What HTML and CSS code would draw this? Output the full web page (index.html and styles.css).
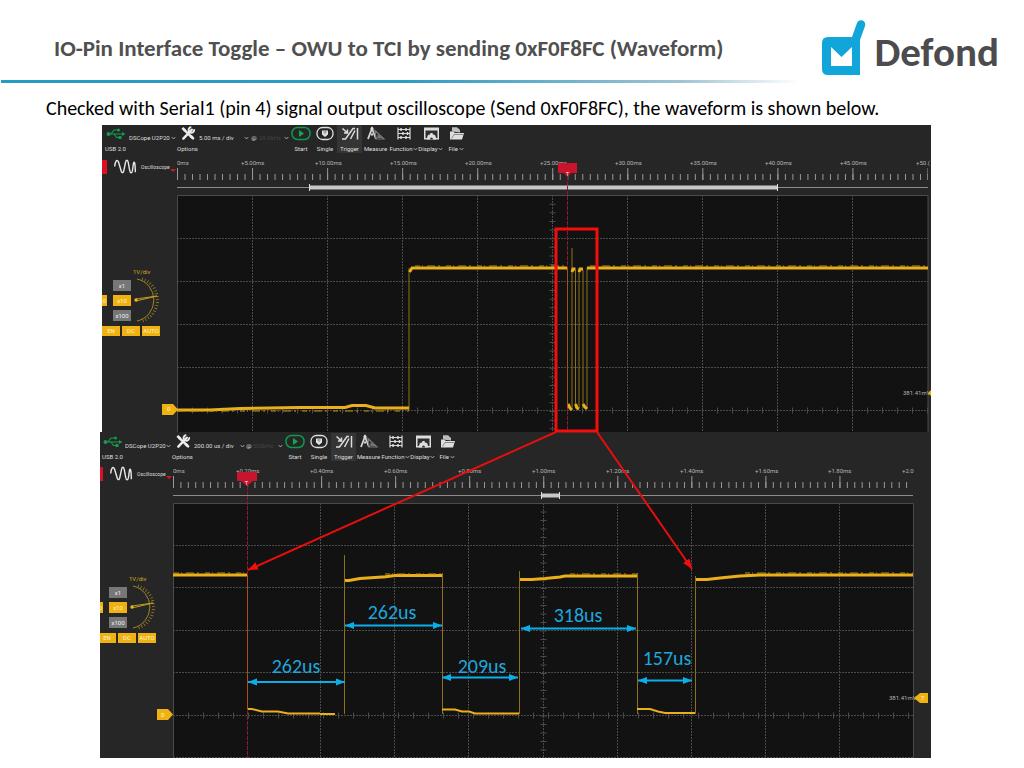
FILE: index.html
```html
<!DOCTYPE html>
<html lang="en">
<head>
<meta charset="utf-8">
<meta name="viewport" content="width=device-width, initial-scale=1">
<title>IO-Pin Interface Toggle</title>
<link rel="stylesheet" href="styles.css">
</head>
<body>
<svg class="sprite" aria-hidden="true">
  <symbol id="usb" viewBox="0 0 20 12"><g fill="none" stroke="#129c50" stroke-width="1.2"><path d="M2 6.500H17M5 6.500L8 2.500H12M8 6.500L10.500 10H13"/></g><g fill="#129c50"><circle cx="2.500" cy="6.500" r="2"/><circle cx="12.500" cy="2.500" r="1.500"/><path d="M16 4.500L19.500 6.500L16 8.500ZM12.500 8.500H15.500V11.500H12.500Z"/></g></symbol>
  <symbol id="tools" viewBox="0 0 16 16"><path d="M3.500 3.500L13 13" stroke="#ececec" stroke-width="2.600"/><path d="M1 3L3 1L6 4L4 6Z" fill="#ececec"/><path d="M12 4L3 13.500" stroke="#ececec" stroke-width="2.600" stroke-linecap="round"/><path d="M14.500 3.500A3 3 0 1 1 11.500 1.200" fill="none" stroke="#ececec" stroke-width="2"/><path d="M9.500 11.500L12 9.500L15 13L13.500 15Z" fill="#ececec"/></symbol>
  <symbol id="start" viewBox="0 0 20 14"><rect x="1" y="1" width="18" height="12" rx="5.500" fill="none" stroke="#0d9a4c" stroke-width="1.500"/><path d="M8 3.500L13 7L8 10.500Z" fill="#12a653"/></symbol>
  <symbol id="single" viewBox="0 0 20 14"><rect x="2" y="1" width="16" height="12" rx="5.500" fill="none" stroke="#dedede" stroke-width="1.300"/><path d="M7 4H13V8L10 10.500L7 8Z" fill="#e6e6e6"/><path d="M8 5.500H12M10 4V8" stroke="#777" stroke-width=".7"/></symbol>
  <symbol id="trigger" viewBox="0 0 20 14"><g fill="none" stroke="#dcdcdc" stroke-width="1.500"><path d="M2 12.500H5.500L13 2H15M17.500 1.500V13M2.500 2L7.500 6.500M7.500 3V6.500H4M10.500 12.500L15 4"/></g></symbol>
  <symbol id="measure" viewBox="0 0 20 14"><path d="M2 12.500L6 2L10 12.500M5 8L7 8" fill="none" stroke="#d5d5d5" stroke-width="1.800"/><path d="M9 4L18 12.500H10ZM12 9V11H14.500Z" fill="none" stroke="#777" stroke-width="1.200"/><circle cx="6" cy="2" r="1.500" fill="#ddd"/></symbol>
  <symbol id="function" viewBox="0 0 20 14"><path d="M4 1V13M16 1V13M4 3H16M4 7H16M4 11H16" stroke="#dadada" stroke-width="1.200"/><path d="M7 1.500V4.500M12 1.500V4.500M9 5.500V8.500M13.500 5.500V8.500M7 9.500V12.500M12 9.500V12.500" stroke="#dadada" stroke-width="1.500"/></symbol>
  <symbol id="display" viewBox="0 0 20 14"><path d="M3 1H18V13H3Z" fill="#dedede"/><path d="M4.500 4H16.500V11.500H4.500Z" fill="#303030"/><path d="M6 13V11L7 8.500L9 8L9.500 6.500H11.500L12 8L14 8.500L15 11V13Z" fill="#dedede"/><path d="M9 13A1.500 2 0 0 1 12 13Z" fill="#303030"/></symbol>
  <symbol id="file" viewBox="0 0 20 14"><path d="M5 5V.8H10L13 3.500V6" fill="#bdbdbd"/><path d="M3 13V5H6L8 6.500H17L15 13Z" fill="#dedede"/><path d="M4.500 12L7 8H16" fill="none" stroke="#666" stroke-width=".7"/></symbol>
  <symbol id="chevron" viewBox="0 0 5 4"><path d="M.7 1L2.500 3L4.300 1" fill="none" stroke="#bbb" stroke-width=".8"/></symbol>
  <symbol id="wave" viewBox="0 0 24 16"><path d="M1 8C1.500 2 3.500 0 5 3L8 13C9 15.500 10.500 15 11 11L12.500 4C13 .5 15 .5 15.500 4L17 12C17.500 15.500 19.500 15.500 20 12L21 5C21.500 1.500 23 3 23 14" fill="none" stroke="#e8e8e8" stroke-width="1.500"/></symbol>
  <symbol id="dial" viewBox="0 0 30 50"><g fill="none" stroke="#c09a24"><path d="M4 4A21.500 21.500 0 0 1 4 46" stroke-width=".8"/><path d="M9 4A22 22 0 0 1 9 46" stroke-width="3" stroke-dasharray=".8 2.200" opacity=".75"/><path d="M3 26L24 21L3 24" stroke-width="1"/></g><circle cx="3" cy="25" r="1.700" fill="#efb414"/></symbol>
  <symbol id="tag" viewBox="0 0 16 11"><path d="M0 0H11L16 5.500L11 11H0Z" fill="#efb211"/></symbol>
</svg>

<header class="header">
  <h1 class="title">IO-Pin Interface Toggle – OWU to TCI by sending 0xF0F8FC (Waveform)</h1>
  <div class="brand">
    <svg class="brand-mark" viewBox="0 0 45 57" aria-hidden="true"><path d="M7 17H31L36 3A4 4 0 0 1 44 6L39 20V55H7Q1 55 1 49V23Q1 17 7 17Z" fill="#12a5da"/><path d="M10 27V46H31V27L20.500 37Z" fill="#fff"/></svg>
    <span class="brand-name">Defond</span>
  </div>
</header>
<div class="rule"></div>

<main>
  <p class="lead">Checked with Serial1 (pin 4) signal output oscilloscope (Send 0xF0F8FC), the waveform is shown below.</p>
  <div class="figure">
    <section class="scope scope-wide" aria-label="Full waveform">
      <div class="toolbar">
        <div class="tool"><svg class="icon"><use href="#usb"/></svg><span>USB 2.0</span></div>
        <label class="picker"><select aria-label="Device"><option>DSCope U2P20</option></select><svg class="chevron"><use href="#chevron"/></svg></label>
        <button class="tool"><svg class="icon"><use href="#tools"/></svg><span>Options</span></button>
        <label class="picker"><select aria-label="Time base"><option>5.00 ms / div</option></select><svg class="chevron"><use href="#chevron"/></svg></label>
        <span class="at">@</span>
        <label class="picker dim"><select aria-label="Sample rate"><option>20.0kHz</option></select><svg class="chevron"><use href="#chevron"/></svg></label>
        <button class="tool"><svg class="icon"><use href="#start"/></svg><span>Start</span></button>
        <button class="tool"><svg class="icon"><use href="#single"/></svg><span>Single</span></button>
        <button class="tool active"><svg class="icon"><use href="#trigger"/></svg><span>Trigger</span></button>
        <button class="tool"><svg class="icon"><use href="#measure"/></svg><span>Measure</span></button>
        <button class="tool"><svg class="icon"><use href="#function"/></svg><span>Function<svg class="chevron"><use href="#chevron"/></svg></span></button>
        <button class="tool"><svg class="icon"><use href="#display"/></svg><span>Display<svg class="chevron"><use href="#chevron"/></svg></span></button>
        <button class="tool"><svg class="icon"><use href="#file"/></svg><span>File <svg class="chevron"><use href="#chevron"/></svg></span></button>
      </div>
      <div class="body">
        <aside class="side">
          <div class="mode"><i class="mode-bar"></i><svg class="wave"><use href="#wave"/></svg><span class="mode-name">Oscilloscope</span><i class="mode-arrow"></i></div>
          <div class="channel">
            <div class="channel-main">
              <button class="chip edge">0</button>
              <div class="probes"><button class="chip grey">x1</button><button class="chip">x10</button><button class="chip grey">x100</button></div>
              <div class="gain"><span>1V/div</span><svg class="dial"><use href="#dial"/></svg></div>
            </div>
            <div class="channel-row"><button class="chip">EN</button><button class="chip">DC</button><button class="chip">AUTO</button></div>
          </div>
        </aside>
        <svg class="plot" viewBox="177 155 754 277" role="img" aria-label="Signal over 50 ms">
          <rect class="screen" x="177" y="195" width="751" height="237"/>
          <path class="minor" stroke-dasharray="1 6.505" d="M177 177H928"/>
          <path class="major" stroke-dasharray="1 74.050" d="M177 174H928"/>
          <path class="grid" d="M252.500 195V432M327.500 195V432M402.500 195V432M477.500 195V432M552.500 195V432M627.500 195V432M702.500 195V432M777.500 195V432M852.500 195V432M177 238.500H928M177 281.500H928M177 324.500H928M177 367.500H928M177 410.500H928"/>
          <path class="ticks" stroke-dasharray="1 14" d="M177 410.500H928"/>
          <path class="ticks" stroke-dasharray="1 7.640" d="M552.500 195V432"/>
          <path class="frame" d="M177.500 432V195.500H928V432"/>
          <path class="span" d="M177 187.500H928"/>
          <path class="window" d="M309 187.500H778"/><path class="window-end" d="M309.500 184V191M777.500 184V191"/>
          <g class="scale">
            <text x="177" y="165">0ms</text><text x="241" y="165">+5.00ms</text><text x="315" y="165">+10.00ms</text><text x="390" y="165">+15.00ms</text><text x="465" y="165">+20.00ms</text><text x="540" y="165">+25.00ms</text><text x="615" y="165">+30.00ms</text><text x="690" y="165">+35.00ms</text><text x="765" y="165">+40.00ms</text><text x="840" y="165">+45.00ms</text><text x="916" y="165">+50.(</text>
          </g>
          <path class="edge-line" d="M409 410V268M572 408V248M575.500 408V270M579 408V270M583 408V270M587 408V268"/>
          <path class="trace" d="M177 410H210L240 408.500L300 407.500H345L352 405.500H366L375 408H409M409.500 272L412 268H568M572 272L573 269H575.500M579 272L580 269H583M587 268H928M568 404L570 408L572 410M575.500 404L577 408L579 409M583 404L585 407L587 409"/>
          <path class="noise" d="M178 411H409M415 266H567M590 266H928"/>
          <path class="trigger-line" d="M567.500 176V432"/>
          <path class="edge-line hot" d="M567.500 268V408"/>
          <path class="flag" d="M558 163H577V173H571L567.500 177L564 173H558Z"/><text class="flag-text" x="566" y="176">T</text>
          <use href="#tag" x="162" y="404" width="16" height="11"/><text class="tag-text" x="167" y="411">0</text>
          <text class="level" x="903" y="395">381.41mV</text><path d="M931 390L928 393L931 396Z" fill="#efb211"/>
        </svg>
      </div>
    </section>

    <section class="scope scope-detail" aria-label="Waveform detail">
      <div class="toolbar">
        <div class="tool"><svg class="icon"><use href="#usb"/></svg><span>USB 2.0</span></div>
        <label class="picker"><select aria-label="Device"><option>DSCope U2P20</option></select><svg class="chevron"><use href="#chevron"/></svg></label>
        <button class="tool"><svg class="icon"><use href="#tools"/></svg><span>Options</span></button>
        <label class="picker"><select aria-label="Time base"><option>200.00 us / div</option></select><svg class="chevron"><use href="#chevron"/></svg></label>
        <span class="at">@</span>
        <label class="picker dim"><select aria-label="Sample rate"><option>500kHz</option></select><svg class="chevron"><use href="#chevron"/></svg></label>
        <button class="tool"><svg class="icon"><use href="#start"/></svg><span>Start</span></button>
        <button class="tool"><svg class="icon"><use href="#single"/></svg><span>Single</span></button>
        <button class="tool active"><svg class="icon"><use href="#trigger"/></svg><span>Trigger</span></button>
        <button class="tool"><svg class="icon"><use href="#measure"/></svg><span>Measure</span></button>
        <button class="tool"><svg class="icon"><use href="#function"/></svg><span>Function<svg class="chevron"><use href="#chevron"/></svg></span></button>
        <button class="tool"><svg class="icon"><use href="#display"/></svg><span>Display<svg class="chevron"><use href="#chevron"/></svg></span></button>
        <button class="tool"><svg class="icon"><use href="#file"/></svg><span>File <svg class="chevron"><use href="#chevron"/></svg></span></button>
      </div>
      <div class="body">
        <aside class="side">
          <div class="mode"><i class="mode-bar"></i><svg class="wave"><use href="#wave"/></svg><span class="mode-name">Oscilloscope</span><i class="mode-arrow"></i></div>
          <div class="channel">
            <div class="channel-main">
              <button class="chip edge">0</button>
              <div class="probes"><button class="chip grey">x1</button><button class="chip">x10</button><button class="chip grey">x100</button></div>
              <div class="gain"><span>1V/div</span><svg class="dial"><use href="#dial"/></svg></div>
            </div>
            <div class="channel-row"><button class="chip">EN</button><button class="chip">DC</button><button class="chip">AUTO</button></div>
          </div>
        </aside>
        <svg class="plot" viewBox="173 462 758 296" role="img" aria-label="Signal over 2 ms">
          <rect class="screen" x="173" y="503" width="741" height="255"/>
          <path class="minor" stroke-dasharray="1 6.405" d="M173 485H913"/>
          <path class="major" stroke-dasharray="1 73.050" d="M173 482H913"/>
          <path class="grid" d="M320.500 503V758M394.500 503V758M468.500 503V758M543.500 503V758M617.500 503V758M691.500 503V758M765.500 503V758M839.500 503V758M173 545.500H913M173 587.500H913M173 630.500H913M173 672.500H913M173 715.500H913M173 757.500H913"/>
          <path class="ticks" stroke-dasharray="1 14" d="M173 715.500H913"/>
          <path class="ticks" stroke-dasharray="1 7.500" d="M543.500 503V758"/>
          <path class="frame" d="M173.500 758V503.500H913.500V758"/>
          <path class="span" d="M173 495.500H913"/>
          <path class="window" d="M541 495.500H560"/><path class="window-end" d="M541.500 492V499M559.500 492V499"/>
          <g class="scale">
            <text x="173" y="473">0ms</text><text x="236" y="473">+0.20ms</text><text x="310" y="473">+0.40ms</text><text x="384" y="473">+0.60ms</text><text x="458" y="473">+0.80ms</text><text x="532" y="473">+1.00ms</text><text x="606" y="473">+1.20ms</text><text x="680" y="473">+1.40ms</text><text x="755" y="473">+1.60ms</text><text x="828" y="473">+1.80ms</text><text x="902" y="473">+2.0</text>
          </g>
          <path class="edge-line" d="M344.500 714V555M442.500 573V714M519.500 714V571M637.500 573V714M695.500 714V576"/>
          <path class="trace" d="M173 575H247M345 580.500H349L360 578.500L382 577H384L395 575.500H442M520 579.500H532L545 578.500L560 577L565 576H637M696 579.500H707L720 578L740 576L760 575H913"/>
          <path class="trace low" d="M247 709H252L262 711.500L278 711.500L288 713.500H320M320 714H335M442 709.500H455L462 711.500H469L475 713.500H519M637 709H650L658 711.500L665 713H695"/>
          <path class="noise" d="M174 573H246M385 574H442M570 574H637M745 573H913"/>
          <path class="trigger-line" d="M247.500 486V758"/>
          <path class="edge-line hot" d="M247.500 575V710"/>
          <path class="flag" d="M237 472H257V481H253L247 486L241 481H237Z"/><text class="flag-text" x="245" y="485">T</text>
          <use href="#tag" x="157" y="709" width="16" height="11"/><text class="tag-text" x="161" y="717">0</text>
          <text class="level" x="889" y="700">381.41mV</text><path d="M928 693H920L914 698L920 703H928Z" fill="#efb211"/><text class="tag-text" x="921" y="700">T</text>
        </svg>
      </div>
    </section>

    <svg class="notes" viewBox="100 125 831 633" aria-label="Pulse widths">
      <defs>
        <marker id="blue-head" viewBox="0 0 10 8" markerWidth="9" markerHeight="8" markerUnits="userSpaceOnUse" refX="10" refY="4" orient="auto-start-reverse"><path d="M0 0L10 4L0 8Z" fill="#0caeea"/></marker>
        <marker id="red-head" viewBox="0 0 10 8" markerWidth="10" markerHeight="9" markerUnits="userSpaceOnUse" refX="10" refY="4" orient="auto"><path d="M0 0L10 4L0 8Z" fill="#f50c0c"/></marker>
      </defs>
      <rect class="focus" x="556" y="229" width="41" height="202"/>
      <path class="callout" d="M556 432L248 570"/><path class="callout" d="M597 432L692 569"/>
      <path class="measure" d="M248 682H345"/><path class="measure" d="M345 625.500H442"/><path class="measure" d="M442 677.500H518"/><path class="measure" d="M521 628.500H636"/><path class="measure" d="M638 680.500H692"/>
      <g class="widths"><text x="296" y="673">262us</text><text x="392" y="619">262us</text><text x="482" y="673">209us</text><text x="578" y="622">318us</text><text x="667" y="665">157us</text></g>
    </svg>
  </div>
</main>
</body>
</html>
```
FILE: styles.css
```css
* { box-sizing: border-box; }
body { margin: 0; background: #fff; color: #000; font-family: Carlito, Lato, sans-serif; }
.sprite { position: absolute; width: 0; height: 0; }

.header { display: flex; justify-content: space-between; align-items: center; height: 80px; padding: 16px 25px 0 54px; }
.title { margin: 0; font-size: 23px; line-height: 32px; font-weight: 700; color: #505050; white-space: nowrap; }
.brand { display: flex; align-items: center; gap: 8px; }
.brand-mark { width: 45px; height: 57px; }
.brand-name { font-size: 41px; line-height: 48px; padding-top: 8px; font-weight: 700; color: #4c4c4e; }
.rule { height: 3px; margin: 0 224px 0 1px; background: linear-gradient(90deg, #259bc6 0%, #2b9bc4 50%, #9fc3d2 85%, #fff 100%); }
.lead { margin: 0; padding: 13px 46px 0; height: 42px; font-size: 20px; line-height: 24px; white-space: nowrap; }

.figure { position: relative; margin: 0 93px 0 100px; }
.scope { background: #262626; color: #dedede; font-family: Roboto, "Open Sans", sans-serif; font-size: 6px; line-height: 8px; overflow: hidden; }
.scope-wide { margin-left: 2px; }
.toolbar { display: grid; height: 30px; align-items: start; }
.scope-wide .toolbar { grid-template-columns: 27px 47px 23px 50px 10px 30px 24px 24px 25px 27px 29px 25px 27px; }
.scope-detail .toolbar { grid-template-columns: 25px 46px 23px 51px 8px 30px 24px 24px 25px 25px 29px 25px 25px; padding-top: 1px; }
button, select { border: 0; margin: 0; padding: 0; background: none; color: inherit; font: inherit; appearance: none; }
.tool { display: flex; flex-direction: column; align-items: center; gap: 4px; padding-top: 1px; white-space: nowrap; }
.tool.active { background: #353535; }
.icon { width: 20px; height: 15px; }
.chevron { flex: none; width: 5px; height: 4px; }
.picker { display: flex; align-items: center; justify-content: space-between; margin-top: 9px; }
.picker select { flex: 1; min-width: 0; height: 8px; overflow: visible; }
.dim select { color: #444; }
.at { margin-top: 9px; text-align: center; }

.body { display: grid; grid-template-columns: 75px minmax(0, 1fr); }
.scope-detail .body { grid-template-columns: 73px minmax(0, 1fr); }
.plot { display: block; width: 100%; overflow: visible; }
.side { padding-top: 4px; }
.mode { display: flex; align-items: center; height: 15px; white-space: nowrap; }
.scope-detail .mode { margin-left: -2px; }
.mode-bar { flex: none; width: 5px; height: 14px; margin-right: 6px; background: #dc1022; }
.wave { flex: none; width: 24px; height: 15px; margin-right: 4px; }
.mode-name { font-size: 5px; }
.mode-arrow { margin-top: 8px; border: 3px solid transparent; border-top-color: #d5132a; border-bottom: 0; }
.channel { margin-top: 94px; color: #d8a91c; }
.scope-detail .channel { margin-left: -2px; }
.channel-main { display: flex; align-items: center; height: 58px; }
.chip { display: block; height: 11px; background: #efb211; color: #fff3cf; text-align: center; line-height: 11px; }
.chip.edge { width: 5px; margin-top: 6px; overflow: hidden; }
.chip.grey { background: #777; color: #eee; }
.probes { display: grid; gap: 4px; width: 18px; margin: 6px 0 0 6px; }
.gain { width: 30px; margin-left: 2px; }
.gain span { display: block; height: 6px; line-height: 6px; }
.dial { display: block; width: 30px; height: 50px; }
.channel-row { display: grid; grid-template-columns: 18px 18px 18px; gap: 2px; }
.channel-row .chip { height: 10px; line-height: 10px; }

.screen { fill: #121212; }
.minor { stroke: #999; stroke-width: 6; fill: none; }
.major { stroke: #999; stroke-width: 12; fill: none; }
.grid { stroke: #4b4b4b; stroke-width: 1; stroke-dasharray: 2 1; fill: none; }
.ticks { stroke: #4b4b4b; stroke-width: 6; fill: none; }
.frame { stroke: #4a4a4a; fill: none; }
.span { stroke: #8c8c8c; fill: none; }
.window { stroke: #c8c8c8; stroke-width: 4; }
.window-end { stroke: #dedede; }
.scale, .level { fill: #b4b4b4; font-size: 6px; }
.edge-line { stroke: #8f7018; stroke-width: 1; fill: none; }
.edge-line.hot { stroke: #a8501c; }
.trace { stroke: #e9b01c; stroke-width: 3; fill: none; }
.trace.low { stroke-width: 2; }
.noise { stroke: #c0931c; stroke-width: 1; stroke-dasharray: 5 2 1 4 8 3 2 6; fill: none; }
.trigger-line { stroke: #8e1a30; stroke-width: 1; stroke-dasharray: 4 1; fill: none; }
.flag { fill: #c8142c; }
.flag-text { fill: #fff; font-size: 5px; }
.tag-text { fill: #fff3cf; font-size: 6px; }

.notes { position: absolute; inset: 0; width: 100%; height: 100%; pointer-events: none; }
.focus { fill: none; stroke: #f50c0c; stroke-width: 3; }
.callout { stroke: #e80e0e; stroke-width: 2; marker-end: url(#red-head); }
.measure { stroke: #0caeea; stroke-width: 2; marker-start: url(#blue-head); marker-end: url(#blue-head); }
.widths { fill: #1fa6dc; font-size: 20px; text-anchor: middle; }
```
